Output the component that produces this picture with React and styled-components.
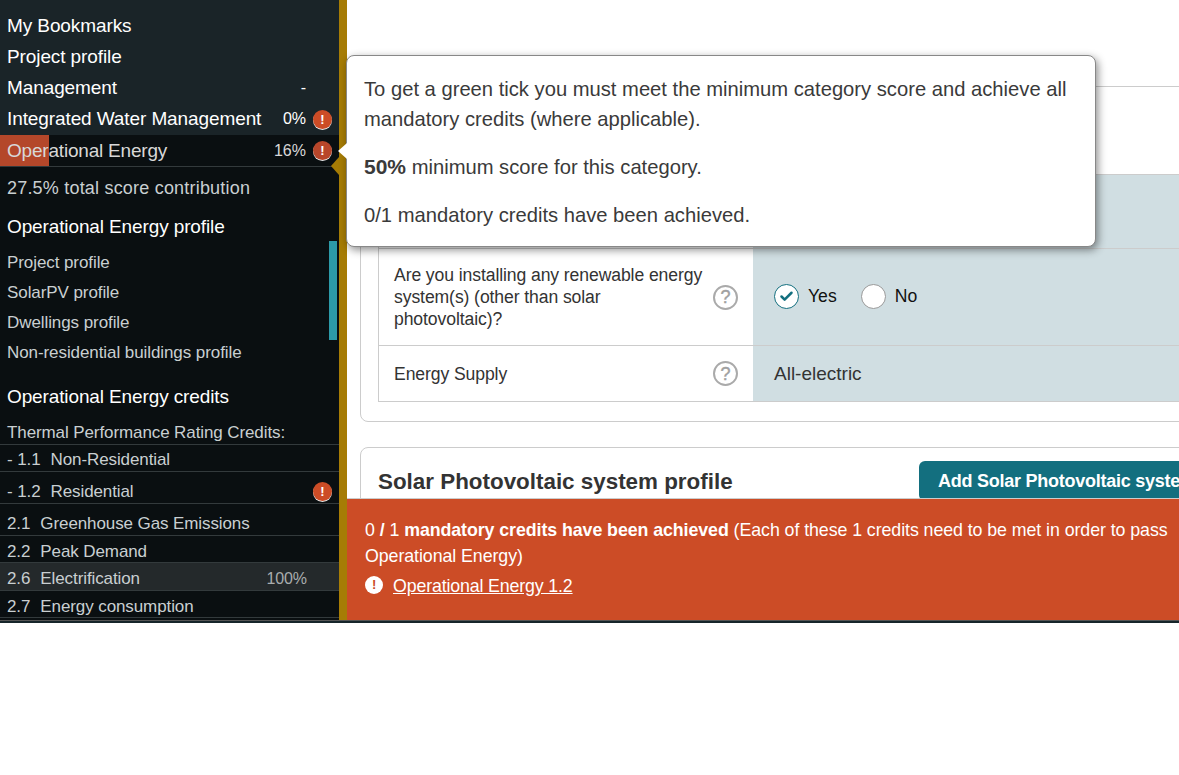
import styled, { createGlobalStyle } from 'styled-components';
import { Check } from 'lucide-react';

const GlobalStyle = createGlobalStyle`
  body {
    margin: 0;
    background: #fff;
    font-family: "Liberation Sans", Arial, sans-serif;
    color: #333;
  }
`;

const Page = styled.div`
  height: 624px;
  background: #16252a;
  border-bottom: 1px solid #fff;
  box-sizing: border-box;
  overflow: hidden;
`;

const Frame = styled.div`
  position: relative;
  display: flex;
  height: 620px;
  border-bottom: 1px solid #555;
`;

const Sidebar = styled.aside`
  position: relative;
  flex: 0 0 339px;
  display: flex;
  flex-direction: column;
  background: #0a0f11;
  font-size: 17px;
  color: #c9cfd1;
  overflow: hidden;
`;

const TopNav = styled.nav`
  background: #1a2428;
  padding-top: 10px;
`;

const NavRow = styled.div`
  display: flex;
  align-items: center;
  height: 31.25px;
  padding: 0 7px;
  font-size: 19px;
  color: #fff;
  letter-spacing: -0.1px;
`;

const ActiveRow = styled(NavRow)`
  height: 31px;
  margin-right: 7px;
  padding-right: 0;
  border-bottom: 1px solid #333a3c;
  color: #d8d8d8;
  letter-spacing: -0.2px;
  background: linear-gradient(to right, #b4472a ${(p) => p.$fill}px, transparent ${(p) => p.$fill}px);
`;

const RowLabel = styled.span`
  flex: 1;
`;

const Score = styled.span`
  margin-right: 7px;
  font-size: 16px;
  letter-spacing: 0;
`;

const Badge = styled.span`
  display: inline-flex;
  align-items: center;
  justify-content: center;
  flex: 0 0 19px;
  width: 19px;
  height: 19px;
  border-radius: 50%;
  background: ${(p) => (p.$dim ? '#b8462a' : '#cc4c26')};
  box-shadow: 0 1px 0 #e8e8e8;
  color: #fff;
  font-size: 13px;
  font-weight: 700;
  letter-spacing: 0;
`;

const BadgeSpacer = styled.span`
  flex: 0 0 19px;
`;

const Contribution = styled.div`
  padding: 10px 7px 0;
  font-size: 18px;
  line-height: 22px;
  letter-spacing: 0.2px;
`;

const SideHeading = styled.h3`
  margin: 0;
  padding: ${(p) => p.$top}px 7px 0;
  font-size: 19px;
  line-height: 24px;
  font-weight: 400;
  letter-spacing: -0.12px;
  color: #fff;
`;

const ProfileList = styled.div`
  margin-top: 9px;
`;

const ProfileLink = styled.div`
  height: 30px;
  padding: 0 7px;
  line-height: 30px;
  letter-spacing: -0.08px;
`;

const ThermalRow = styled.div`
  margin-top: 12px;
  box-sizing: border-box;
  height: 24px;
  padding: 1px 7px 0;
  line-height: 22px;
  border-bottom: 1px solid #333a3c;
  letter-spacing: -0.1px;
`;

const CreditRow = styled.div`
  display: flex;
  align-items: center;
  box-sizing: border-box;
  height: ${(p) => p.$h}px;
  padding: ${(p) => p.$pad}px 7px 0;
  border-bottom: 1px solid #333a3c;
  background: ${(p) => (p.$current ? '#24292b' : 'transparent')};
  letter-spacing: -0.1px;
`;

const CreditNo = styled.span`
  margin-right: 10px;
`;

const CreditPct = styled.span`
  margin-right: 25px;
  font-size: 16px;
  color: #a9adae;
`;

const Thumb = styled.div`
  position: absolute;
  left: 329px;
  top: 241px;
  width: 8px;
  height: 99px;
  background: #2c9aa8;
`;

const Pointer = styled.div`
  position: absolute;
  left: 331px;
  top: 157px;
  width: 0;
  height: 0;
  border-top: 9px solid transparent;
  border-bottom: 9px solid transparent;
  border-right: 8px solid #a67c05;
`;

const GoldBar = styled.div`
  flex: 0 0 8px;
  background: #a67c05;
`;

const Main = styled.main`
  position: relative;
  flex: 1;
  min-width: 0;
  padding: 86px 0 0 13px;
  background: #fff;
  overflow: hidden;
`;

const Card = styled.section`
  width: 1000px;
  box-sizing: border-box;
  border: 1px solid #ccc;
  border-radius: 8px;
`;

const FormCard = styled(Card)`
  padding: 87px 18px 19px 17px;
`;

const Table = styled.div`
  display: grid;
  grid-template-columns: 374px 1fr;
  border-left: 1px solid #ccc;
  border-bottom: 1px solid #ccc;
`;

const QuestionCell = styled.div`
  display: flex;
  align-items: center;
  box-sizing: border-box;
  height: ${(p) => p.$h}px;
  padding: 0 15px;
  border-top: 1px solid #ccc;
  font-size: 17.6px;
  line-height: 22px;
  color: #333;
  letter-spacing: -0.1px;
`;

const QuestionText = styled.span`
  flex: 1;
  max-width: 312px;
  margin-right: auto;
`;

const AnswerCell = styled.div`
  display: flex;
  align-items: center;
  box-sizing: border-box;
  height: ${(p) => p.$h}px;
  padding: 0 0 ${(p) => p.$lift || 0}px 21px;
  border-top: 1px solid #ccc;
  background: #d0dee2;
  font-size: 19px;
  color: #333;
`;

const HelpIcon = styled.span`
  display: inline-flex;
  align-items: center;
  justify-content: center;
  flex: 0 0 21px;
  width: 21px;
  height: 21px;
  border: 2px solid #aaa;
  border-radius: 50%;
  background: #fff;
  color: #a0a0a0;
  font-size: 18px;
  line-height: 1;
  -webkit-text-stroke: 0.4px #a0a0a0;
`;

const RadioOption = styled.label`
  display: flex;
  align-items: center;
  margin-right: 24px;
  font-size: 17.6px;
  color: #111;
`;

const RadioMark = styled.span`
  display: inline-flex;
  align-items: center;
  justify-content: center;
  box-sizing: border-box;
  width: 25px;
  height: 25px;
  margin-right: 9px;
  border: 1px solid ${(p) => (p.$on ? '#136f7f' : '#999')};
  border-radius: 50%;
  background: #fff;
  color: #136f7f;
`;

const ProfileCard = styled(Card)`
  display: flex;
  align-items: flex-start;
  margin-top: 25px;
  padding: 13px 17px 40px;
`;

const CardTitle = styled.h2`
  flex: 0 0 541px;
  margin: 0;
  padding-top: 5px;
  font-size: 22.4px;
  line-height: 32px;
  font-weight: 700;
  color: #333;
`;

const AddButton = styled.button`
  flex-shrink: 0;
  height: 40px;
  padding: 0 19px;
  border: 0;
  border-radius: 6px;
  background: #136f7f;
  color: #fff;
  font-family: inherit;
  font-size: 18px;
  font-weight: 700;
  letter-spacing: -0.25px;
  white-space: nowrap;
`;

const AlertBar = styled.div`
  position: absolute;
  left: 0;
  right: 0;
  bottom: 0;
  box-sizing: border-box;
  height: 122px;
  padding: 18px 0 0 18px;
  border-top: 1px solid #ccc;
  background: #cc4c26;
  color: #fff;
  font-size: 17.8px;
  line-height: 26px;
  letter-spacing: -0.07px;
`;

const AlertLink = styled.div`
  display: flex;
  align-items: center;
  margin-top: 4px;
  letter-spacing: -0.15px;
`;

const AlertBadge = styled.span`
  display: inline-flex;
  align-items: center;
  justify-content: center;
  width: 18px;
  height: 18px;
  margin: -3px 10px 0 0;
  border-radius: 50%;
  background: #fff;
  color: #cc4c26;
  font-size: 13px;
  font-weight: 700;
`;

const Underlined = styled.a`
  color: #fff;
  text-decoration: underline;
`;

const Tooltip = styled.div`
  position: absolute;
  left: 346px;
  top: 55px;
  box-sizing: border-box;
  width: 750px;
  height: 192px;
  padding: 18px 17px 0;
  border: 1px solid #888;
  border-radius: 8px;
  background: #fff;
  box-shadow: 2px 3px 9px rgba(0, 0, 0, 0.45);
  font-size: 20.2px;
  line-height: 30px;
  color: #3a3a3a;
`;

const TipArrow = styled.div`
  position: absolute;
  left: -9px;
  top: 87px;
  width: 0;
  height: 0;
  border-top: 8px solid transparent;
  border-bottom: 8px solid transparent;
  border-right: 9px solid #fff;
`;

const TipLine = styled.p`
  margin: 0 0 18px;
  b {
    font-size: 21px;
  }
`;

const credits = [
  { no: '- 1.1', name: 'Non-Residential', h: 27, pad: 3 },
  { no: '- 1.2', name: 'Residential', h: 32, pad: 8, flag: true },
  { no: '2.1', name: 'Greenhouse Gas Emissions', h: 32, pad: 8 },
  { no: '2.2', name: 'Peak Demand', h: 27, pad: 5 },
  { no: '2.6', name: 'Electrification', h: 28, pad: 5, pct: '100%', current: true },
  { no: '2.7', name: 'Energy consumption', h: 27, pad: 5 },
];

export default function App() {
  return (
    <>
      <GlobalStyle />
      <Page>
        <Frame>
          <Sidebar>
            <TopNav>
              <NavRow><RowLabel>My Bookmarks</RowLabel></NavRow>
              <NavRow><RowLabel>Project profile</RowLabel></NavRow>
              <NavRow>
                <RowLabel>Management</RowLabel>
                <Score>-</Score>
                <BadgeSpacer />
              </NavRow>
              <NavRow>
                <RowLabel>Integrated Water Management</RowLabel>
                <Score>0%</Score>
                <Badge>!</Badge>
              </NavRow>
            </TopNav>
            <ActiveRow $fill={49}>
              <RowLabel>Operational Energy</RowLabel>
              <Score>16%</Score>
              <Badge $dim>!</Badge>
            </ActiveRow>
            <Contribution>27.5% total score contribution</Contribution>
            <SideHeading $top={16}>Operational Energy profile</SideHeading>
            <ProfileList>
              <ProfileLink>Project profile</ProfileLink>
              <ProfileLink>SolarPV profile</ProfileLink>
              <ProfileLink>Dwellings profile</ProfileLink>
              <ProfileLink>Non-residential buildings profile</ProfileLink>
            </ProfileList>
            <SideHeading $top={17}>Operational Energy credits</SideHeading>
            <ThermalRow>Thermal Performance Rating Credits:</ThermalRow>
            {credits.map((c) => (
              <CreditRow key={c.no} $h={c.h} $pad={c.pad} $current={c.current}>
                <CreditNo>{c.no}</CreditNo>
                <RowLabel>{c.name}</RowLabel>
                {c.pct && <CreditPct>{c.pct}</CreditPct>}
                {c.flag && <Badge>!</Badge>}
              </CreditRow>
            ))}
            <Thumb />
            <Pointer />
          </Sidebar>
          <GoldBar />
          <Main>
            <FormCard>
              <Table>
                <QuestionCell $h={74} />
                <AnswerCell $h={74} />
                <QuestionCell $h={97}>
                  <QuestionText>
                    Are you installing any renewable energy system(s) (other than solar photovoltaic)?
                  </QuestionText>
                  <HelpIcon>?</HelpIcon>
                </QuestionCell>
                <AnswerCell $h={97} $lift={2}>
                  <RadioOption>
                    <RadioMark $on><Check size={15} strokeWidth={4} /></RadioMark>
                    Yes
                  </RadioOption>
                  <RadioOption>
                    <RadioMark />
                    No
                  </RadioOption>
                </AnswerCell>
                <QuestionCell $h={56}>
                  <QuestionText>Energy Supply</QuestionText>
                  <HelpIcon>?</HelpIcon>
                </QuestionCell>
                <AnswerCell $h={56}>All-electric</AnswerCell>
              </Table>
            </FormCard>
            <ProfileCard>
              <CardTitle>Solar Photovoltaic system profile</CardTitle>
              <AddButton>Add Solar Photovoltaic system</AddButton>
            </ProfileCard>
            <AlertBar>
              <div>
                0 <b>/</b> 1 <b>mandatory credits have been achieved</b> (Each of these 1 credits need to be met in order to pass Operational Energy)
              </div>
              <AlertLink>
                <AlertBadge>!</AlertBadge>
                <Underlined>Operational Energy 1.2</Underlined>
              </AlertLink>
            </AlertBar>
          </Main>
          <Tooltip>
            <TipArrow />
            <TipLine>To get a green tick you must meet the minimum category score and achieve all mandatory credits (where applicable).</TipLine>
            <TipLine><b>50%</b> minimum score for this category.</TipLine>
            <TipLine>0/1 mandatory credits have been achieved.</TipLine>
          </Tooltip>
        </Frame>
      </Page>
    </>
  );
}
